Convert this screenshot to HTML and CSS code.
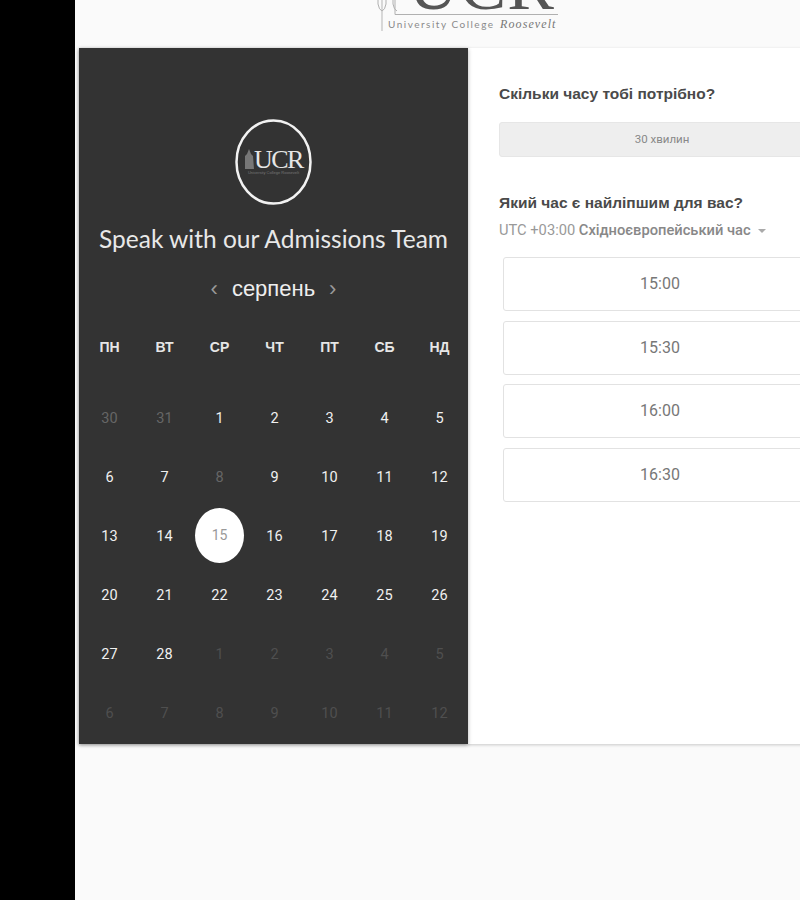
FILE: index.html
```html
<!DOCTYPE html>
<html lang="uk">
  <head>
    <meta name="viewport" content="width=device-width,initial-scale=1.0">
    <title>Speak with our Admissions Team</title>
    <link rel="stylesheet" href="styles.css">
  </head>
  <body>
    <div class="sidebar"></div>
    <main class="page">
      <header class="top">
        <svg class="top-logo" width="200" height="48" viewBox="0 0 200 48">
          <path d="M7 0V4Q8 10 11 11Q14 10 15 4V0M22 0V4Q23 10 26 11" fill="none" stroke="#b0b0b0" stroke-width="1"/>
          <path d="M11 0V31" stroke="#b5b5b5" stroke-width="1"/>
          <path d="M24 0V14.500H187" fill="none" stroke="#b0b0b0" stroke-width="1"/>
          <text class="logo-big" x="37" y="9">UCR</text>
          <text class="logo-small" x="17" y="28">University College</text>
          <text class="logo-script" x="129" y="28">Roosevelt</text>
        </svg>
      </header>
      <section class="card">
        <div class="cal-panel">
          <svg class="brand" width="77" height="86" viewBox="0 0 77 86">
            <ellipse cx="38.500" cy="43" rx="37" ry="41.500" fill="none" stroke="#f2f2f2" stroke-width="2.500"/>
            <path d="M10 50V37L12 35L14 30L16 35L18 37L19 50Z" fill="#777"/>
            <text class="brand-name" x="19" y="49">UCR</text>
            <text class="brand-sub" x="38.500" y="55">University College Roosevelt</text>
          </svg>
          <h2 class="cal-title">Speak with our Admissions Team</h2>
          <div class="month-nav">
            <span class="arrow">‹</span>
            <span class="month">серпень</span>
            <span class="arrow">›</span>
          </div>
          <div class="weekdays">
            <span>ПН</span><span>ВТ</span><span>СР</span><span>ЧТ</span><span>ПТ</span><span>СБ</span><span>НД</span>
          </div>
          <div class="days">
            <span class="off">30</span><span class="off">31</span><span>1</span><span>2</span><span>3</span><span>4</span><span>5</span>
            <span>6</span><span>7</span><span class="off">8</span><span>9</span><span>10</span><span>11</span><span>12</span>
            <span>13</span><span>14</span><span class="today"><b>15</b></span><span>16</span><span>17</span><span>18</span><span>19</span>
            <span>20</span><span>21</span><span>22</span><span>23</span><span>24</span><span>25</span><span>26</span>
            <span>27</span><span>28</span><span class="off dim">1</span><span class="off dim">2</span><span class="off dim">3</span><span class="off dim">4</span><span class="off dim">5</span>
            <span class="off dim">6</span><span class="off dim">7</span><span class="off dim">8</span><span class="off dim">9</span><span class="off dim">10</span><span class="off dim">11</span><span class="off dim">12</span>
          </div>
        </div>
        <div class="time-panel">
          <h3 class="question">Скільки часу тобі потрібно?</h3>
          <div class="duration">30 хвилин</div>
          <h3 class="question second">Який час є найліпшим для вас?</h3>
          <div class="zone">UTC +03:00 <b>Східноєвропейський час</b><i class="caret"></i></div>
          <ul class="slots">
            <li>15:00</li>
            <li>15:30</li>
            <li>16:00</li>
            <li>16:30</li>
          </ul>
        </div>
      </section>
    </main>
  </body>
</html>
```

FILE: styles.css
```css
html, body { margin: 0; height: 100%; overflow: hidden; }
body { display: flex; background-color: #fafafa; font-family: "Liberation Sans", Arial, sans-serif; }

.sidebar { width: 75px; flex: none; background: #000; }
.page { width: 800px; flex: none; }

/* logo is cut off by the top of the window */
.top { height: 48px; padding-left: 296px; overflow: hidden; }
.top-logo { display: block; }
.logo-big { font-family: "Liberation Serif", serif; font-size: 70px; fill: #555; letter-spacing: 1px; }
.logo-small { font-family: Lato, sans-serif; font-size: 10px; fill: #8a8a8a; letter-spacing: 1.5px; }
.logo-script { font-family: "Liberation Serif", serif; font-style: italic; font-size: 12px; fill: #777; letter-spacing: 1.100px; }

.card { display: flex; margin-left: 4px; height: 696px; background: #fff; box-shadow: 0 1px 3px rgba(0, 0, 0, 0.2); }

.cal-panel { width: 389px; flex: none; box-sizing: border-box; padding: 71px 3px 0; background: #333; color: #fff; text-align: center; box-shadow: 0 1px 4px rgba(0, 0, 0, 0.3); }
.brand { display: block; margin: 0 auto; }
.brand-name { font-family: "Liberation Serif", serif; font-size: 26px; fill: #e6e6e6; letter-spacing: -1.500px; }
.brand-sub { font-family: "Liberation Sans", sans-serif; font-size: 4px; fill: #777; text-anchor: middle; }
.cal-title { margin: 16px 0 0; font-family: Lato, sans-serif; font-weight: 400; font-size: 24.500px; line-height: 36px; color: #e8e8e8; white-space: nowrap; }

.month-nav { display: flex; justify-content: center; align-items: center; gap: 14px; margin-top: 14px; height: 36px; }
.month { font-size: 22px; color: #eee; font-family: "Liberation Sans", sans-serif; }
.arrow { font-size: 22px; color: #999; line-height: 24px; }

.weekdays { display: grid; grid-template-columns: repeat(7, 55px); margin-top: 30px; font-size: 14px; font-weight: bold; line-height: 20px; color: #e6e6e6; }

.days { display: grid; grid-template-columns: repeat(7, 55px); grid-auto-rows: 59px; margin-top: 32px; font-family: Roboto, sans-serif; font-size: 14.500px; color: #f0f0f0; }
.days span { display: flex; align-items: center; justify-content: center; }
.days .off { color: #666; }
.days .dim { color: #4f4f4f; }
.days .today b { display: flex; align-items: center; justify-content: center; width: 49px; height: 55px; margin-bottom: 2px; border-radius: 50%; background: #fff; color: #999; font-weight: normal; font-size: 14px; padding-bottom: 2px; box-sizing: border-box; }

.time-panel { flex: 1; padding: 35px 0 0 31px; color: #555; }
.question { margin: 0; font-size: 15.500px; line-height: 22px; font-weight: bold; color: #4a4a4a; }
.question.second { margin-top: 35px; }
.duration { margin-top: 17px; width: 326px; height: 35px; line-height: 33px; box-sizing: border-box; background: #eee; border: 1px solid #e6e6e6; border-radius: 3px; text-align: center; font-family: Roboto, sans-serif; font-size: 11.500px; color: #888; }
.zone { margin-top: 5px; font-size: 14.700px; line-height: 22px; color: #999; font-family: Roboto, sans-serif; }
.zone b { font-weight: 500; color: #888; }
.caret { display: inline-block; margin-left: 7px; vertical-align: middle; border: 4px solid transparent; border-top-color: #aaa; border-bottom: 0; }

.slots { list-style: none; margin: 16px 0 0 4px; padding: 0; display: flex; flex-direction: column; gap: 9.500px; }
.slots li { width: 314px; height: 54px; line-height: 52px; box-sizing: border-box; border: 1px solid #e2e2e2; border-radius: 3px; text-align: center; font-family: Roboto, sans-serif; font-size: 16px; color: #777; background: #fff; }
```
